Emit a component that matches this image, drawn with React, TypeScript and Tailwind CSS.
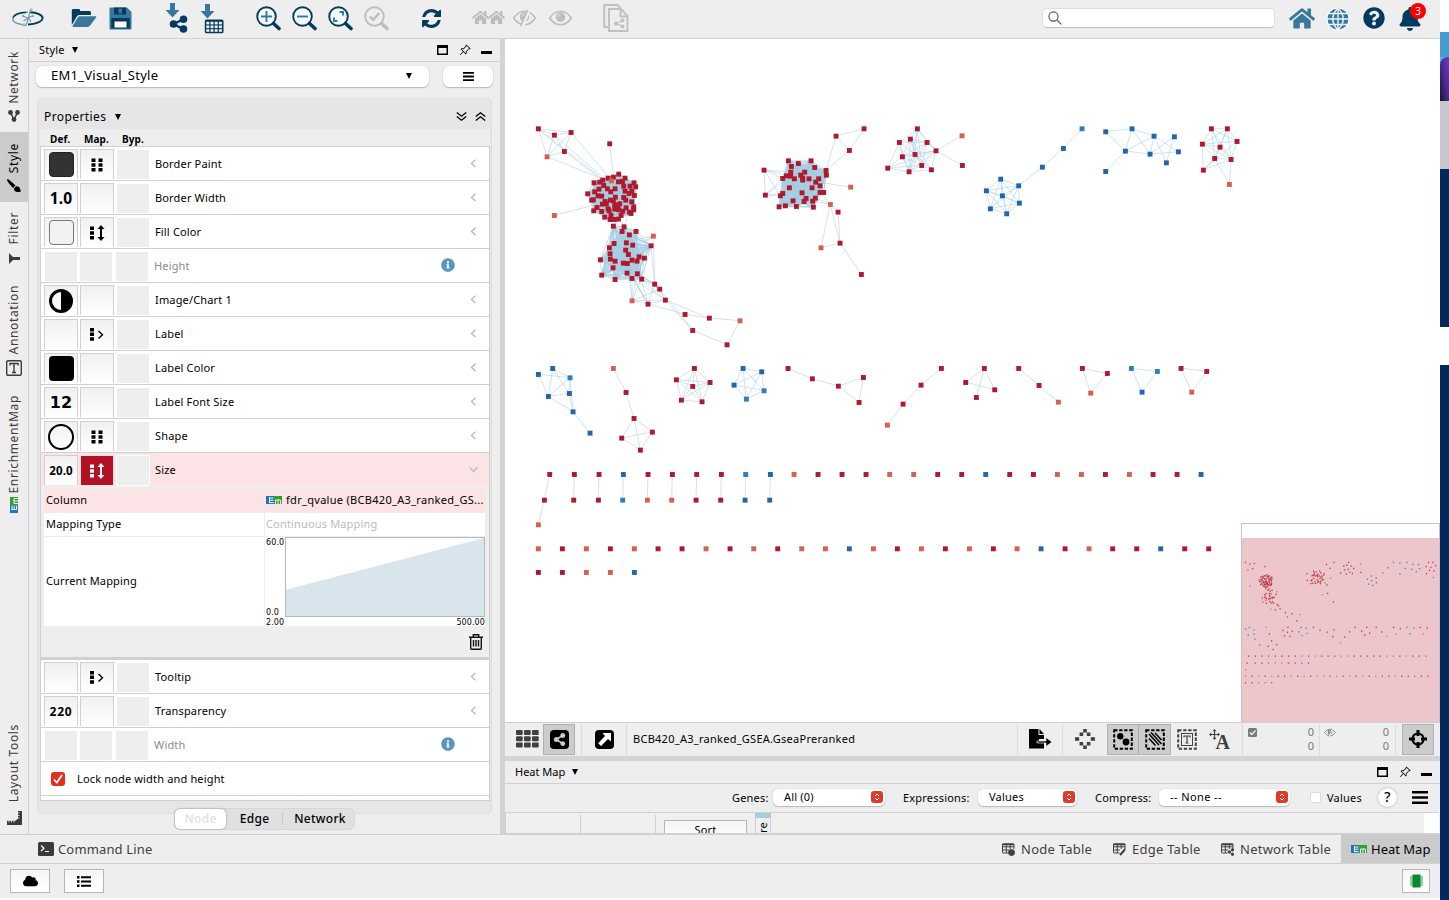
import React from "react";
import { FaHome, FaQuestionCircle, FaBell, FaShareAlt, FaInfoCircle, FaCloud } from "react-icons/fa";
import { BsPinAngle } from "react-icons/bs";

type NodeT = [number, number, string];
type Group = { ox: number; oy: number; nodes: NodeT[]; edges: number[][]; full?: [number, number][] };

const COLORS: Record<string, string> = { R: "#b2182b", O: "#d6604d", B: "#2166ac", L: "#2f7fbc" };

const parse = (s: string): NodeT[] =>
  s.trim().split(/\s+/).map((p) => {
    const [x, y, c] = p.split(",");
    return [Number(x), Number(y), c || "R"];
  });
const pairs = (s: string): number[][] => (s ? s.trim().split(/\s+/).map((p) => p.split("-").map(Number)) : []);

const GROUPS: Group[] = [
  {
    ox: 505, oy: 110,
    nodes: parse(
      `100,56 148,75 198,67 178,124 126,140,O 314,101 148,316,O 445,378,O 381,572,O 705,632,O
      449,522 464,537 481,570 429,582 540,613 613,624 563,661 666,704`
    ),
    edges: pairs("0-1 0-2 0-3 0-4 1-2 1-3 1-4 2-4 2-3 3-4 10-11 10-13 11-12 8-11 8-12 8-13 10-12 12-13 10-7 11-16 12-15 13-14 14-15 12-16 15-9 9-17 17-16"),
  },
  {
    ox: 505, oy: 110,
    nodes: parse(
      `341,192 267,218 248,251 260,270 266,302 299,321 315,328 360,204 387,218 392,230 388,256 380,275 386,290 378,310
      325,201 309,204 293,210 284,216 296,226 282,237 269,245 279,257 290,258 307,236 317,245 330,236 340,215 352,214
      356,228 375,228 360,243 372,250 380,243 356,262 362,270 331,261 325,272 316,270 300,274 292,282 276,292 290,304
      309,296 312,302 329,284 344,281 338,290 329,297 341,299 353,303 363,293 373,306 386,299 348,316 340,327 327,328
      318,316 304,281 265,269 319,212,O`
    ),
    edges: [], full: [[0, 60]],
  },
  {
    ox: 505, oy: 110,
    nodes: parse(
      `325,348 357,350 351,364 393,364 373,374 438,407 327,400 364,398 383,405 313,413 362,420 315,431 370,433 402,440
      418,444 286,449 316,447 330,453 381,450 396,453 355,459 367,460 324,473 366,489 397,491 290,495 330,508 381,505 410,507`
    ),
    edges: [], full: [[0, 29]],
  },
  {
    ox: 750, oy: 110,
    nodes: parse(
      `115,152 183,152 145,160 124,169 194,172 228,181 229,195 122,186 109,197 122,198 98,205 133,206 164,186 152,195
      158,204 158,210 177,206 206,206 197,216 210,227 186,233 118,233 156,248 210,247 221,247 98,250 91,257 196,264
      168,265 188,273 162,274 129,272 139,289 106,287 87,290 190,291
      42,180 46,255 258,78 342,56 298,121 302,231,O 241,283,O 264,306 270,399 213,413,O 334,493`
    ),
    edges: pairs("36-37 36-9 36-10 36-26 36-7 37-10 37-26 37-9 37-25 38-39 38-40 39-40 38-5 40-5 18-41 42-29 42-27 42-43 42-44 43-44 42-45 44-45 44-46 42-23"),
    full: [[0, 36]],
  },
  {
    ox: 750, oy: 110,
    nodes: parse(`502,56 481,87 448,97 531,97 558,122 495,133 457,140 515,166 544,179 477,185 413,174 636,77,O 637,166`),
    edges: pairs("0-1 0-2 0-3 0-4 0-5 0-7 0-9 1-2 1-3 1-5 1-6 1-7 1-8 1-9 2-3 2-5 2-6 2-10 2-9 3-4 3-5 3-7 3-6 3-9 4-5 4-7 4-8 4-9 4-10 4-6 5-6 5-7 5-8 5-9 6-7 6-9 6-10 7-8 7-9 8-9 9-10 7-10 4-11 4-12"),
  },
  {
    ox: 970, oy: 110,
    nodes: parse(`92,207,B 146,227,B 49,242,B 97,257,B 148,279,B 61,296,B 110,311,B 217,171,B 280,115,B 336,56,L`),
    edges: pairs("0-1 0-2 0-3 0-4 0-5 0-6 1-2 1-3 1-4 1-5 1-6 2-3 2-4 2-5 2-6 3-4 3-5 3-6 4-5 4-6 5-6 1-7 7-8 8-9"),
  },
  {
    ox: 970, oy: 110,
    nodes: parse(`407,65,B 486,56,B 552,78,B 466,123,B 540,132,B 613,80,B 625,125,B 589,158,B 407,184,B`),
    edges: pairs("0-1 0-3 1-2 1-3 1-4 2-3 2-4 2-6 2-7 3-4 4-5 4-6 5-7 3-8"),
  },
  {
    ox: 970, oy: 110,
    nodes: parse(`724,56 772,56 697,102 801,94 750,111 734,145 783,148 700,180 778,223,O`),
    edges: pairs("0-1 0-2 0-3 0-4 0-5 0-6 1-2 1-3 1-4 1-5 1-6 2-3 2-6 2-7 2-4 2-5 3-6 3-7 4-6 4-5 5-6 5-7 6-7 5-8 6-8"),
  },
  {
    ox: 505, oy: 350,
    nodes: parse(`100,73,B 143,55,B 195,83,L 193,130,B 130,139,B 204,185,B 255,249,B`),
    edges: pairs("0-2 0-4 1-2 1-3 1-4 2-3 2-4 2-5 3-4 3-5 4-5 5-6"),
  },
  {
    ox: 505, oy: 350,
    nodes: parse(`325,55,O 363,127 387,205 350,264 442,246 406,300`),
    edges: pairs("0-1 1-2 2-3 2-4 2-5 3-4 3-5 4-5"),
  },
  {
    ox: 505, oy: 350,
    nodes: parse(`568,55 514,89 615,97 563,109 529,150 591,155`),
    edges: pairs("0-1 0-2 0-3 0-4 0-5 1-2 1-3 1-4 1-5 2-3 2-4 2-5 3-4 3-5 4-5"),
  },
  {
    ox: 505, oy: 350,
    nodes: parse(`714,55,B 770,65,B 687,105,B 777,122,L 724,147,L`),
    edges: pairs("0-1 0-2 0-3 0-4 1-2 1-3 1-4 2-3 2-4 3-4"),
  },
  {
    ox: 505, oy: 350,
    nodes: parse(`849,55 922,86 1000,108 1075,82 1062,157`),
    edges: pairs("0-1 1-2 2-3 2-4 3-4"),
  },
  {
    ox: 505, oy: 350,
    nodes: parse(
      `134,373 118,450 100,524,O 208,373 206,450 282,373 280,450 355,373,B 353,450,L 429,373 427,450,O 502,373 500,450,O
      575,373 573,450 649,373 647,450 722,373,L 720,450,B 796,373,B 794,450,B 867,373,O 939,373 1011,373 1083,373`
    ),
    edges: pairs("0-1 1-2 3-4 5-6 7-8 9-10 11-12 13-14 15-16 17-18 19-20"),
  },
  {
    ox: 505, oy: 350,
    nodes: parse(
      `100,596,O 172,596 244,596,O 316,596 388,596,O 459,596 531,596 603,596,O 675,596 746,596,O 818,596 890,596,O 961,596,O 1033,596,B
      100,667 172,667 244,667,O 316,667,O 388,667,B`
    ),
    edges: [],
  },
  {
    ox: 870, oy: 350,
    nodes: parse(
      `214,55 153,105 99,162 52,225,O 343,55 287,97 374,119 319,142 446,55 507,106 565,156,O 637,55 712,70 662,129,O
      784,55,L 862,64,L 816,126,B 933,55 1010,64 965,126,O`
    ),
    edges: pairs("0-1 1-2 2-3 4-5 4-6 4-7 5-6 8-9 9-10 11-12 11-13 12-13 14-15 14-16 15-16 17-18 17-19 18-19"),
  },
  {
    ox: 870, oy: 350,
    nodes: parse(
      `59,373,O 131,373,O 203,373 275,373 347,373,B 419,373 490,373 562,373,O 634,373,O 706,373 778,373,O 849,373 921,373 993,373,B
      10,596,O 82,596 154,596,O 226,596 298,596,O 370,596 441,596,O 513,596,B 585,596 657,596,O 728,596 800,596 872,596,B 944,596 1016,596`
    ),
    edges: [],
  },
];

/* Edges that join nodes of different groups, in canvas coordinates. */
const LINKS =
  "M538.3 128.7L605 181M554.3 135L608 182M571 132.3L612 181M564.3 151.3L610 186M547 156.7L605 180M609.7 143.7L613.7 178M554.3 215.3L598 204M613.3 226L619 218M613.3 226L609 249M613.3 226L614 243M613.3 226L602 274M624 227L628 214M624 227L615 210M622 231L612 216M624 227L616 250" +
  "M653.3 236L634 240M653.3 236L620 257M653.3 236L632 247M653.3 236L628 262M654.7 284L637 274M654.7 284L632 270M654.7 284L641 279M659.7 289L641 279M659.7 289L637 273M665.3 300L641 279M665.3 300L632 278M648 304L632 278M648 304L630 273M632 300.7L632 278M632 300.7L641 279M632 300.7L629 273M632 300.7L637 273M648 304L641 279M654.7 284L651 246M648 304L625 262";

const point = (g: Group, n: NodeT): [number, number] => [g.ox + n[0] / 3, g.oy + n[1] / 3];
const segment = (g: Group, a: number, b: number) => {
  const [x1, y1] = point(g, g.nodes[a]);
  const [x2, y2] = point(g, g.nodes[b]);
  return `M${x1.toFixed(1)} ${y1.toFixed(1)}L${x2.toFixed(1)} ${y2.toFixed(1)}`;
};
const sparsePath = GROUPS.map((g) => g.edges.map((e) => segment(g, e[0], e[1])).join("")).join("") + LINKS;
const densePath = GROUPS.map((g) =>
  (g.full || [])
    .map(([from, to]) => {
      let d = "";
      for (let i = from; i < to; i++) for (let j = i + 1; j < to; j++) d += segment(g, i, j);
      return d;
    })
    .join("")
).join("");
const ALL = GROUPS.flatMap((g) => g.nodes.map((n) => ({ p: point(g, n), c: COLORS[n[2]] })));

function NetworkGraph() {
  return (
    <svg className="block h-[683px] w-[935px]" viewBox="505 39 935 683">
      <path d={densePath} stroke="#a6cee3" strokeWidth="0.8" strokeOpacity="0.9" fill="none" />
      {sparsePath.split("M").filter(Boolean).map((d, i) => (
        <path key={i} d={"M" + d} stroke="#a6cee3" strokeWidth="1" strokeOpacity="0.55" fill="none" />
      ))}
      {ALL.map((n, i) => (
        <rect key={i} x={n.p[0] - 2.4} y={n.p[1] - 2.3} width="4.9" height="4.9" fill={n.c} />
      ))}
    </svg>
  );
}

function Minimap() {
  return (
    <div className="absolute bottom-0 right-0 h-[199px] w-[199px] border border-b-0 border-[#d9b9bf] bg-[#ecc6ca]">
      <div className="h-[14px] bg-white" />
      <svg className="block h-[184px] w-[197px]" viewBox="1242 538 197 184">
        {ALL.map((n, i) => (
          <rect key={i} x={1244.8 + (n.p[0] - 538) * 0.272} y={561.8 + (n.p[1] - 128.7) * 0.271} width="1.3" height="1.3" fill={n.c} fillOpacity="0.8" />
        ))}
      </svg>
    </div>
  );
}

const NAVY = "#043a5d";
const STEEL = "#38789f";

const CytoLogo = () => (
  <svg className="h-[20px] w-[34px]" viewBox="0 0 34 20" fill="none">
    <path d="M12 16.500C5 16 1.500 13.500 1.800 10.800 2.300 7 9 4.500 17 4.300" stroke="#5f87a5" strokeWidth="1.200" />
    <path d="M2 9.500C3.500 6.500 9 4.600 15 4.300" stroke={NAVY} strokeWidth="1.500" />
    <path d="M19 4.300c7 .2 12.500 2.500 12.600 5.600.1 3.600-6.600 6.400-14.600 6.600" stroke={NAVY} strokeWidth="1.900" />
    <path d="M20 2c-1.500 2-2 5-2.500 8s-2 6-3 8M12 8l5 2 4-2M12.500 13l5-3 2.500 4" stroke="#6f94ad" strokeWidth="1.100" />
    <circle cx="20" cy="2" r="1.200" stroke="#6f94ad" strokeWidth=".7" /><circle cx="13" cy="17" r="1.200" stroke="#6f94ad" strokeWidth=".7" />
    <circle cx="12" cy="8" r="1" fill="#6f94ad" /><circle cx="22" cy="8" r="1" fill="#6f94ad" />
  </svg>
);
const OpenIcon = () => (
  <svg className="h-[20px] w-[26px]" viewBox="0 0 26 20">
    <path d="M.8 17V2.200Q.8.900 2.200.9h5.600q1.300 0 1.300 1.300v.9h9.400q1.400 0 1.400 1.400V7H8.400Q7 7 6 8.200z" fill={NAVY} />
    <path d="M8.500 8.300h16q1.300 0 .6 1.100l-6 8.100q-.9 1.400-2.600 1.400H2.200q-1.300 0-.5-1.100l5-8.200q.7-1.300 1.800-1.300z" fill={STEEL} />
  </svg>
);
const SaveIcon = () => (
  <svg className="h-[23px] w-[23px]" viewBox="0 0 23 23">
    <path d="M.5 1.500q0-1 1-1H18L22.500 5v16.500q0 1-1 1h-20q-1 0-1-1z" fill={STEEL} />
    <path d="M5 .5h12v7H5z" fill={NAVY} /><path d="M9.500 1.600h3.500v4.800H9.500z" fill={STEEL} />
    <path d="M2.300 11h18.400v10.500H2.300z" fill={NAVY} /><path d="M5.500 14.500h12v6h-12z" fill="#fff" />
  </svg>
);
const Arrow = () => <path d="M5 0h5v7h4.500l-7 7.400L.5 7H5z" fill={STEEL} />;
const ImportNetwork = () => (
  <svg className="h-[30px] w-[23px]" viewBox="0 0 23 30">
    <Arrow />
    <path d="M18 16.500L8.500 21l9.500 5" stroke={NAVY} strokeWidth="2.400" fill="none" />
    <circle cx="18.500" cy="16.300" r="3.800" fill={NAVY} /><circle cx="8.500" cy="21" r="3.800" fill={NAVY} /><circle cx="18.500" cy="26" r="3.800" fill={NAVY} />
  </svg>
);
const ImportTable = () => (
  <svg className="h-[30px] w-[24px]" viewBox="0 0 24 30">
    <Arrow />
    <rect x="4.800" y="15.500" width="18.700" height="13.800" rx="1.500" fill={NAVY} />
    {[0, 1, 2].map((r) => [0, 1, 2, 3].map((c) => <rect key={`${r}${c}`} x={6.3 + c * 4.2} y={17.8 + r * 3.7} width="3" height="2.600" fill="#eee" />))}
  </svg>
);
const Lens = ({ kind }: { kind: string }) => {
  const off = kind === "check";
  const c = off ? "#bdbdbd" : NAVY;
  return (
    <svg className="h-[25px] w-[25px]" viewBox="0 0 25 25" fill="none">
      <circle cx="10.500" cy="10.500" r="9.300" stroke={c} strokeWidth="1.900" fill={off ? "none" : "#f4fafc"} />
      <path d="M17.500 17.500l5.500 5" stroke={c} strokeWidth="3.600" strokeLinecap="round" />
      {kind === "in" && <path d="M5 10.500h11M10.500 5v11" stroke={STEEL} strokeWidth="1.900" />}
      {kind === "out" && <path d="M5 10.500h11" stroke={STEEL} strokeWidth="1.900" />}
      {kind === "fit" && <path d="M11.500 6h3.500v3.500M9.500 15H6v-3.500" stroke={STEEL} strokeWidth="1.900" />}
      {off && <path d="M6 10.500l3.200 3.200L15.200 7" stroke={c} strokeWidth="2.400" />}
    </svg>
  );
};
const Refresh = () => (
  <svg className="h-[19px] w-[19px]" viewBox="0 0 1536 1536">
    <path fill={NAVY} d="M1511 928q0 5-1 7-64 268-268 434.500T764 1536q-146 0-282.500-55T238 1324l-129 129q-19 19-45 19t-45-19-19-45V960q0-26 19-45t45-19h448q26 0 45 19t19 45-19 45l-137 137q71 66 161 102t187 36q134 0 250-65t186-179q11-17 53-117 8-23 30-23h192q13 0 22.500 9.500t9.500 22.500zm25-800v448q0 26-19 45t-45 19h-448q-26 0-45-19t-19-45 19-45l138-138Q969 256 768 256q-134 0-250 65T332 500q-11 17-53 117-8 23-30 23H50q-13 0-22.500-9.500T18 608v-7q65-268 270-434.500T768 0q146 0 284 55.500T1297 212l130-129q19-19 45-19t45 19 19 45z" />
  </svg>
);
const EyeIcon = ({ slash, cls }: { slash?: boolean; cls: string }) => (
  <svg className={cls} viewBox="0 0 26 20" fill="none">
    <path d="M1 10Q6 2.500 13 2.500T25 10q-5 7.500-12 7.500T1 10z" stroke="currentColor" strokeWidth="1.800" />
    <circle cx="13" cy="9" r="5.300" fill="currentColor" />
    <path d="M10.500 8.500q0-2.500 2.500-2.500" stroke="#eee" strokeWidth="1" />
    {slash && <><path d="M10.500 20L18 0" stroke="#eee" strokeWidth="4" /><path d="M8.800 19L16.500 1" stroke="currentColor" strokeWidth="1.700" /></>}
  </svg>
);
const CopyDoc = () => (
  <svg className="h-[28px] w-[26px]" viewBox="0 0 26 28" fill="none" stroke="#c0c0c0" strokeWidth="1.900">
    <path d="M5 23H1.200V1h13.300l3 3M6 5h12l6.500 7v15H6z" /><path d="M17.500 5v7.500h7" />
    <path d="M19.500 16.500L13 19.500l6.500 3" strokeWidth="1.300" />
    <g fill="#c0c0c0" stroke="none"><circle cx="19.500" cy="16.500" r="2" /><circle cx="13" cy="19.500" r="2" /><circle cx="19.500" cy="22.500" r="2" /></g>
  </svg>
);
const Globe = () => (
  <svg className="h-[24px] w-[24px]" viewBox="0 0 24 24" fill="none">
    <circle cx="12" cy="12" r="11.500" fill="#fff" /><circle cx="12" cy="12" r="10.500" fill={STEEL} />
    <path d="M12 1v22M1 12h22M3 6.500h18M3 17.500h18M12 1Q1.500 12 12 23M12 1q10.500 11 0 22" stroke="#e9f3f8" strokeWidth="1.400" />
  </svg>
);
const Maximize = () => (
  <svg className="h-[10px] w-[11px]" viewBox="0 0 11 10"><path d="M.5 0h10q.5 0 .5.500V10H0V.5Q0 0 .5 0zM1.500 3v5.500h8V3z" fillRule="evenodd" /></svg>
);
const WindowButtons = () => (
  <div className="flex items-center">
    <Maximize />
    <BsPinAngle className="ml-[11px] h-[12px] w-[12px]" />
    <div className="ml-[10px] mt-[5px] h-[3px] w-[11px] bg-black" />
  </div>
);
const Caret = ({ cls = "" }: { cls?: string }) => (
  <svg className={`h-[6px] w-[6px] ${cls}`} viewBox="0 0 6 6"><path d="M0 0h6L3 6z" /></svg>
);
const Burger = ({ cls }: { cls: string }) => (
  <svg className={cls} viewBox="0 0 16 13"><path d="M0 0h16v2.600H0zM0 5.200h16v2.600H0zM0 10.400h16V13H0z" /></svg>
);
const EmIcon = ({ cls = "" }: { cls?: string }) => (
  <svg className={`h-[8px] w-[16px] shrink-0 ${cls}`} viewBox="0 0 16 8" fill="none">
    <path d="M0 0h8v8H0z" fill="#1f78b4" /><path d="M8 0h8v8H8z" fill="#33a02c" />
    <path d="M3.500 1.500V7M3 2h4.500M3 4.200h4.500M3 6.600h4.500" stroke="#f0f7fb" strokeWidth="1" />
    <path d="M9.500 8V4h5V8M12 4v4" stroke="#f0f8ef" strokeWidth="1" />
  </svg>
);

function Toolbar() {
  return (
    <div className="flex h-[39px] shrink-0 items-start border-b border-[#d0d0d0] pl-[11px]">
      <div className="mt-[8px]"><CytoLogo /></div>
      <div className="ml-[26px] mt-[8px]"><OpenIcon /></div>
      <div className="ml-[12px] mt-[7px]"><SaveIcon /></div>
      <div className="ml-[33px] mt-[3px]"><ImportNetwork /></div>
      <div className="ml-[12px] mt-[4px]"><ImportTable /></div>
      <div className="ml-[32px] mt-[6px] flex gap-[11px]">
        <Lens kind="in" /><Lens kind="out" /><Lens kind="fit" /><Lens kind="check" />
      </div>
      <div className="ml-[33px] mt-[9px]"><Refresh /></div>
      <div className="ml-[31px] mt-[9px] flex text-[#bdbdbd]"><FaHome className="h-[17px] w-[17px]" /><FaHome className="-ml-[1px] h-[17px] w-[17px]" /></div>
      <EyeIcon slash cls="ml-[7px] mt-[9px] h-[18px] w-[25px] text-[#bdbdbd]" />
      <EyeIcon cls="ml-[11px] mt-[9px] h-[18px] w-[25px] text-[#bdbdbd]" />
      <div className="ml-[30px] mt-[4px]"><CopyDoc /></div>
      <div className="ml-[413px] mt-[8px] flex h-[20px] w-[233px] items-center rounded-[5px] border border-[#dedede] border-b-[#c0c0c0] bg-white pl-[5px]">
        <svg className="h-[14px] w-[14px]" viewBox="0 0 14 14" fill="none" stroke="#555" strokeWidth="1.100"><circle cx="5.500" cy="5.500" r="4.600" /><path d="M9 9l4.300 4.300" /></svg>
      </div>
      <FaHome className="ml-[14px] mt-[6px] h-[25px] w-[26px] text-[#38789f]" />
      <div className="ml-[11px] mt-[7px]"><Globe /></div>
      <FaQuestionCircle className="ml-[13px] mt-[7px] h-[22px] w-[22px] text-[#043a5d]" />
      <div className="relative ml-[14px] mt-[7px]">
        <FaBell className="h-[24px] w-[22px] text-[#043a5d]" />
        <div className="absolute -right-[5px] -top-[4px] flex h-[16px] w-[16px] items-center justify-center rounded-full bg-[#fe0000] text-[10px] text-white">3</div>
      </div>
    </div>
  );
}

const VTab = ({ label, icon, cls }: { label: string; icon: React.ReactNode; cls: string }) => (
  <div className={`flex w-[28px] flex-col items-center justify-between ${cls}`}>
    <div className="rotate-180 whitespace-nowrap text-[12px] leading-[16px] tracking-[0.65px] [writing-mode:vertical-rl]">{label}</div>
    {icon}
  </div>
);

function SideTabs() {
  return (
    <div className="flex w-[29px] shrink-0 flex-col border-r border-[#d0d0d0] text-[#3c3c3c]">
      <VTab label="Network" cls="h-[93px] pb-[10px] pt-[12px]" icon={
        <svg className="h-[12px] w-[12px]" viewBox="0 0 12 12" fill="currentColor"><path d="M2.500 2.500L6 9.500l3.500-7" stroke="currentColor" strokeWidth="1.500" fill="none" /><circle cx="2.500" cy="2.500" r="2.400" /><circle cx="9.500" cy="2.500" r="2.400" /><circle cx="6" cy="9.500" r="2.400" /></svg>} />
      <VTab label="Style" cls="h-[70px] bg-[#cbcbcb] pb-[9px] pt-[11px] text-black" icon={
        <svg className="h-[14px] w-[14px]" viewBox="0 0 14 14"><path d="M.5 0Q2 .3 8.500 6.500L6 9Q.3 3 0 1z" /><path d="M9.300 7.300q2.700-.3 3.500 1.700.6 2.300 1.200 3.500-4.500 1.500-6.300-.7Q6.700 10.500 7 9.300z" /></svg>} />
      <VTab label="Filter" cls="h-[62px] pt-[10px]" icon={<svg className="h-[11px] w-[11px]" viewBox="0 0 11 11" fill="currentColor"><path d="M0 0v11l4-4h7V4H4z" /></svg>} />
      <VTab label="Annotation" cls="h-[112px] pt-[21px]" icon={
        <svg className="h-[16px] w-[16px]" viewBox="0 0 16 16" fill="none" stroke="currentColor"><rect x=".7" y=".7" width="14.600" height="14.600" rx="1.300" strokeWidth="1.400" /><path d="M4 5.500v-2h8v2M8 3.500v9M6 12.500h4" strokeWidth="1.400" /></svg>} />
      <VTab label="EnrichmentMap" cls="h-[137px] pt-[19px]" icon={<div className="flex h-[16px] w-[16px] items-center justify-center"><EmIcon cls="-rotate-90" /></div>} />
      <div className="grow" />
      <VTab label="Layout Tools" cls="mb-[9px] h-[101px]" icon={
        <svg className="h-[14px] w-[15px]" viewBox="0 0 15 14" fill="currentColor"><path d="M11 0h4v14H0V9.700h8.500L11 7.500z" /><path d="M2 9v2.500M4.500 9v2.500M7 9v2.500M10 2h2.500M10 4.500h2.500M10 7h2.500" stroke="#eee" strokeWidth=".8" /></svg>} />
    </div>
  );
}

const Discrete = () => <svg className="h-[14px] w-[12px]" viewBox="0 0 12 14"><path d="M.5.500h4v3.500h-4zM7.500.5h4v3.500h-4zM.5 5.200h4v3.500h-4zM7.500 5.200h4v3.500h-4zM.5 9.900h4v3.500h-4zM7.500 9.900h4v3.500h-4z" fill="currentColor" /></svg>;
const Continuous = () => <svg className="h-[16px] w-[15px]" viewBox="0 0 15 16" fill="currentColor"><path d="M0 1.500h4V5H0zM0 6.200h4v3.500H0zM0 10.900h4v3.500H0zM11 0l3.500 4H12v8h2.500L11 16l-3.500-4H10V4H7.500z" /></svg>;
const Passthrough = () => <svg className="h-[13px] w-[14px]" viewBox="0 0 14 13"><path d="M0 0h4v3.500H0zM0 4.600h4v3.500H0zM0 9.200h4v3.500H0z" /><path d="M8.500 3l4 3.800-4 3.800" fill="none" stroke="#000" strokeWidth="1.400" /></svg>;

const mapIcons: Record<string, React.ReactNode> = { d: <Discrete />, c: <Continuous />, p: <Passthrough /> };

function PropertyRow({ label, def, map, off, active }: { label: string; def?: React.ReactNode; map?: string; off?: boolean; active?: boolean }) {
  const cell = off
    ? "ml-[1px] mr-[1px] mt-[1px] h-[29px] w-[32px] bg-[#eeeeee]"
    : "h-[30px] w-[34px] border border-b-0 border-[#d0d0d0] bg-linear-to-b from-[#f0f0f0] to-white";
  return (
    <div className={`flex h-[34px] shrink-0 border-t border-[#d0d0d0] pl-[3px] pt-[2px] ${active ? "bg-[#fbe3e6]" : "bg-white"}`}>
      <div className={`flex items-center justify-center ${cell}`}>{def}</div>
      <div className={`ml-[2px] flex items-center justify-center ${active ? "h-[30px] w-[34px] border border-b-0 border-[#fbe3e6] bg-[#b31124] text-white" : cell}`}>{map && mapIcons[map]}</div>
      <div className={`ml-[3px] mt-[1px] h-[29px] w-[32px] bg-[#eeeeee] ${active ? "outline-1 outline-white" : ""}`} />
      <div className={`ml-[6px] w-[287px] text-[11px] leading-[30px] tracking-[0.16px] ${off ? "text-[#8a8a8a]" : "text-black"}`}>{label}</div>
      <div className="flex grow items-center pb-[3px]">
        {off ? <FaInfoCircle className="h-[14px] w-[14px] text-[#5a96bb]" /> : (
          <svg className={`ml-[27px] h-[9px] w-[9px] ${active ? "-rotate-90" : ""}`} viewBox="0 0 9 9" fill="none" stroke="#b8b8b8" strokeWidth="1.300"><path d="M6.500.8L2.500 4.500l4 3.700" /></svg>
        )}
      </div>
    </div>
  );
}

const Num = ({ children, cls = "text-[12px] tracking-[0.1px]" }: { children: React.ReactNode; cls?: string }) => (
  <span className={`font-bold ${cls}`}>{children}</span>
);

function Mapping() {
  return (
    <div className="flex h-[171px] shrink-0 flex-col bg-[#eeeeee] pl-[3px] pr-[4px] pt-[3px] text-[11px] tracking-[0.16px]">
      <div className="flex h-[23px] items-center bg-[#fbe3e6]">
        <div className="w-[220px] pb-[2px] pl-[2px]">Column</div>
        <div className="flex grow items-center border-l border-[#eeeeee] pb-[1px] pl-[1px]"><EmIcon /><span className="ml-[4px] whitespace-nowrap pb-[1px] tracking-[0.3px]">fdr_qvalue (BCB420_A3_ranked_GS...</span></div>
      </div>
      <div className="mt-[1px] flex h-[23px] items-center bg-white">
        <div className="w-[220px] pb-[2px] pl-[2px]">Mapping Type</div>
        <div className="h-full grow border-l border-[#eeeeee] pl-[1px] leading-[21px] text-[#bcbcbc]">Continuous Mapping</div>
      </div>
      <div className="mt-[1px] flex h-[89px] items-center bg-white">
        <div className="w-[220px] pb-[2px] pl-[2px]">Current Mapping</div>
        <div className="flex h-full grow flex-col border-l border-[#eeeeee]">
          <div className="flex">
            <div className="flex h-[80px] w-[20px] flex-col justify-between whitespace-nowrap pl-[1px] pt-[1px] font-['DejaVu_Sans'] text-[8px] leading-[9px] tracking-[0.1px]"><span>60.0</span><span>0.0</span></div>
            <svg className="h-[80px] w-[200px]" viewBox="0 0 200 80"><path d="M0 53L199 1V80H0z" fill="#d9e5ed" /><rect x=".5" y=".5" width="199" height="79" fill="none" stroke="#b5b9bc" /></svg>
          </div>
          <div className="flex justify-between pl-[1px] pt-[1px] font-['DejaVu_Sans'] text-[8px] leading-[9px] tracking-[0.1px]"><span>2.00</span><span>500.00</span></div>
        </div>
      </div>
      <div className="flex justify-end pr-[2px] pt-[8px]">
        <svg className="h-[16px] w-[14px]" viewBox="0 0 14 16" fill="none" stroke="#111" strokeWidth="1.400"><path d="M0 3.200h14M4.300 3V.8h5.400V3M1.700 3.200v11q0 1 1 1h8.600q1 0 1-1v-11M4.500 6v6.500M7 6v6.500M9.500 6v6.500" /></svg>
      </div>
    </div>
  );
}

function StylePanel() {
  return (
    <div className="flex w-[471px] shrink-0 flex-col text-[11px]">
      <div className="flex h-[23px] items-center border-b border-[#d0d0d0] pl-[10px] pr-[8px]">
        <span className="-mt-[1px] tracking-[0.2px]">Style</span><Caret cls="ml-[7px]" />
        <div className="ml-auto"><WindowButtons /></div>
      </div>
      <div className="flex pl-[7px] pt-[4px]">
        <div className="flex h-[21px] w-[393px] items-center justify-between rounded-[6px] bg-white pb-[1px] pl-[15px] pr-[17px] text-[13px] tracking-[0.25px] shadow-[0_0_1px_#aaa,0_1px_1px_#bbb]"><span className="pb-[1px]">EM1_Visual_Style</span><Caret /></div>
        <div className="ml-[14px] flex h-[21px] w-[50px] items-center justify-center rounded-[6px] bg-white pb-[1px] shadow-[0_0_1px_#aaa,0_1px_1px_#bbb]"><Burger cls="h-[9px] w-[11px]" /></div>
      </div>
      <div className="ml-[8px] mt-[11px] flex h-[716px] w-[455px] flex-col rounded-[5px] border border-[#dedede] bg-[#e6e6e6] pl-[2px]">
        <div className="flex h-[30px] items-center pl-[4px] pr-[5px] pt-[5px] text-[12px] tracking-[0.4px]">
          <span>Properties</span><Caret cls="ml-[9px]" />
          <svg className="ml-auto h-[9px] w-[11px]" viewBox="0 0 11 9" fill="none" stroke="#000" strokeWidth="1.300"><path d="M.8.500l4.700 3.700L10.200.500M.8 4.500l4.700 3.700 4.700-3.700" /></svg>
          <svg className="ml-[8px] h-[9px] w-[11px]" viewBox="0 0 11 9" fill="none" stroke="#000" strokeWidth="1.300"><path d="M.8 8.500l4.700-3.700 4.700 3.700M.8 4.500L5.500.8l4.700 3.700" /></svg>
        </div>
        <div className="flex h-[17px] w-[450px] items-center bg-[#eeeeee] pl-[1px] pt-[3px] text-[10px] font-bold tracking-[0.1px]">
          <span className="w-[34px] pl-[9px]">Def.</span><span className="w-[38px] pl-[9px]">Map.</span><span className="pl-[9px]">Byp.</span>
        </div>
        <div className="flex h-[655px] w-[450px] flex-col border border-t-0 border-[#d0d0d0] bg-white">
          <PropertyRow label="Border Paint" map="d" def={<div className="h-[25px] w-[25px] rounded-[4px] border border-[#222] bg-[#333333]" />} />
          <PropertyRow label="Border Width" def={<Num cls="text-[15.5px] tracking-[0.2px]">1.0</Num>} />
          <PropertyRow label="Fill Color" map="c" def={<div className="h-[25px] w-[25px] rounded-[4px] border border-[#777] bg-[#f2f2f2]" />} />
          <PropertyRow label="Height" off />
          <PropertyRow label="Image/Chart 1" def={<svg className="h-[24px] w-[24px]" viewBox="0 0 24 24"><circle cx="12" cy="12" r="10.500" fill="none" stroke="#000" strokeWidth="3" /><path d="M12 1a11 11 0 010 22z" /></svg>} />
          <PropertyRow label="Label" map="p" />
          <PropertyRow label="Label Color" def={<div className="h-[25px] w-[25px] rounded-[4px] bg-black" />} />
          <PropertyRow label="Label Font Size" def={<Num cls="font-['DejaVu_Sans'] text-[16px] tracking-[0.2px]">12</Num>} />
          <PropertyRow label="Shape" map="d" def={<svg className="h-[26px] w-[26px]" viewBox="0 0 26 26"><circle cx="13" cy="13" r="12" fill="none" stroke="#000" strokeWidth="2" /></svg>} />
          <PropertyRow label="Size" map="c" active def={<Num cls="text-[11.5px] tracking-[0.1px]">20.0</Num>} />
          <Mapping />
          <div className="h-[2px] shrink-0 bg-[#d0d0d0]" />
          <PropertyRow label="Tooltip" map="p" />
          <PropertyRow label="Transparency" def={<Num cls="text-[12px] tracking-[0.8px]">220</Num>} />
          <PropertyRow label="Width" off />
          <div className="flex h-[34px] shrink-0 items-center border-t border-[#d0d0d0] pl-[10px]">
            <div className="flex h-[14px] w-[14px] items-center justify-center rounded-[3px] bg-[#e0301f]"><svg className="h-[10px] w-[10px]" viewBox="0 0 10 10"><path d="M1 5.500l2.800 3L9 1" fill="none" stroke="#fff" strokeWidth="1.800" /></svg></div>
            <span className="ml-[12px] tracking-[0.16px]">Lock node width and height</span>
          </div>
          <div className="h-px bg-[#d0d0d0]" />
        </div>
      </div>
      <div className="relative -mt-[6px] ml-[145px] flex h-[22px] w-[181px] items-center rounded-[6px] border border-[#d6d6d6] bg-[#e0e0e0] text-[12px] font-medium tracking-[0.3px]">
        <div className="flex h-[20px] w-[51px] items-center justify-center rounded-[5px] bg-white text-[#e0e0e0] shadow-[0_0_2px_#888]">Node</div>
        <div className="w-[57px] text-center">Edge</div>
        <div className="-ml-px h-[12px] w-px bg-[#c8c8c8]" />
        <div className="grow pl-[3px] text-center">Network</div>
      </div>
    </div>
  );
}

const Sep = ({ cls }: { cls: string }) => <div className={`h-[31px] w-px shrink-0 bg-[#dcdcdc] ${cls}`} />;
const Frame = ({ c = "#000" }: { c?: string }) => <rect x="1.200" y="1.200" width="17.600" height="18.600" fill="none" stroke={c} strokeWidth="2" strokeDasharray="3.300 1.700" />;

function ViewToolbar() {
  const stack = "flex flex-col text-right text-[11px] leading-[14px] text-[#7a7a7a]";
  return (
    <div className="flex h-[34px] shrink-0 items-center border-t border-[#cfcfcf] pb-[1px]">
      <svg className="ml-[11px] h-[18px] w-[23px]" viewBox="0 0 23 18" fill="#404040">
        {[0, 1, 2].map((r) => [0, 1, 2].map((c) => <rect key={`${r}${c}`} x={c * 8} y={r * 6.3} width="6.700" height="5" rx="1" />))}
      </svg>
      <div className="ml-[4px] flex h-[31px] w-[32px] items-center justify-center border border-[#b0b0b0] bg-[#cccccc]">
        <div className="flex h-[19px] w-[19px] items-center justify-center rounded-[4px] bg-black text-[#ccc]"><FaShareAlt className="h-[13px] w-[13px]" /></div>
      </div>
      <Sep cls="ml-[6px]" />
      <div className="ml-[13px] flex h-[19px] w-[19px] items-center justify-center rounded-[4px] bg-black">
        <svg className="h-[13px] w-[13px]" viewBox="0 0 13 13"><path d="M4.500 0H13v8.500L10 6l-7 7-2.800-2.800L7 3z" fill="#fff" /></svg>
      </div>
      <Sep cls="ml-[12px]" />
      <span className="ml-[6px] w-[391px] pb-[1px] text-[11px] tracking-[0.27px]">BCB420_A3_ranked_GSEA.GseaPreranked</span>
      <Sep cls="-ml-[7px]" />
      <svg className="ml-[11px] h-[20px] w-[23px] shrink-0" viewBox="0 0 23 20"><path d="M0 0h9.500v6H15v4h-5v4h5v5.500H0z" /><path d="M10.500 0L15 5h-4.500z" /><path d="M8 12h9V8.500l6 4.500-6 4.500V14H8z" stroke="#eee" strokeWidth=".7" /></svg>
      <Sep cls="ml-[10px]" />
      <svg className="ml-[12px] h-[20px] w-[20px] shrink-0" viewBox="0 0 20 20" fill="#404040"><path d="M8.200 0h3.600v3.500H8.200zM4.600 3.500h3.600V7H4.600zM11.800 3.500h3.600V7h-3.600zM0 8.200h4.200v3.600H0zM15.800 8.200H20v3.600h-4.200zM4.600 13h3.600v3.500H4.600zM11.800 13h3.600v3.500h-3.600zM8.200 16.500h3.600V20H8.200z" /></svg>
      <div className="ml-[12px] flex h-[31px] w-[32px] shrink-0 items-center justify-center border border-[#b0b0b0] bg-[#cccccc]"><svg className="h-[21px] w-[20px]" viewBox="0 0 20 21"><Frame /><circle cx="7.300" cy="7.300" r="3.200" /><circle cx="13" cy="13" r="3.400" /></svg></div>
      <div className="flex h-[31px] w-[32px] shrink-0 items-center justify-center border border-l-0 border-[#b0b0b0] bg-[#cccccc]"><svg className="h-[21px] w-[20px]" viewBox="0 0 20 21"><Frame /><path d="M4 5l10 11M6 3.500l10.500 11.500M10 4l6.500 7M4 9.500l6.500 7" stroke="#000" strokeWidth="1.500" /></svg></div>
      <svg className="ml-[6px] h-[21px] w-[20px] shrink-0" viewBox="0 0 20 21" fill="none"><Frame c="#404040" /><rect x="4.500" y="4.500" width="11" height="12" stroke="#404040" /><path d="M7 8.500V7h6v1.500M10 7v7M8.500 14h3" stroke="#404040" strokeWidth="1.200" /></svg>
      <div className="relative ml-[12px] h-[20px] w-[20px] shrink-0">
        <svg className="h-[11px] w-[11px]" viewBox="0 0 11 11" fill="#404040"><path d="M5.500 0l2 2.200H6.100v2.700h2.700V3.500l2.200 2-2.200 2V6.100H6.100v2.700h1.400l-2 2.200-2-2.200h1.400V6.100H2.200v1.400L0 5.500l2.200-2v1.400h2.700V2.200H3.500z" /></svg>
        <span className="absolute -right-[1px] bottom-[1px] font-['Liberation_Serif'] text-[20px] font-bold leading-[12px] text-[#404040]">A</span>
      </div>
      <Sep cls="ml-[13px]" />
      <div className="ml-[5px] mt-[1px] flex h-[29px] w-[66px] shrink-0 justify-between">
        <svg className="mt-[3px] h-[9px] w-[9px]" viewBox="0 0 9 9"><rect width="9" height="9" rx="1.500" fill="#7a7a7a" /><path d="M1.800 4.500l2 2L7.500 2.500" stroke="#eee" strokeWidth="1.300" fill="none" /></svg>
        <div className={stack}><span>0</span><span>0</span></div>
      </div>
      <Sep cls="ml-[5px] h-[20px]" />
      <div className="ml-[4px] mt-[1px] flex h-[29px] w-[65px] shrink-0 justify-between">
        <EyeIcon slash cls="mt-[3px] h-[9px] w-[12px] text-[#7a7a7a]" />
        <div className={stack}><span>0</span><span>0</span></div>
      </div>
      <Sep cls="ml-[6px]" />
      <div className="ml-[6px] flex h-[31px] w-[32px] shrink-0 items-center justify-center border border-[#b0b0b0] bg-[#cccccc]"><svg className="h-[18px] w-[18px]" viewBox="0 0 18 18"><circle cx="9" cy="9" r="5.600" fill="none" stroke="#000" strokeWidth="2" /><path d="M9 0v6M9 12v6M0 9h6M12 9h6" stroke="#000" strokeWidth="3" /></svg></div>
    </div>
  );
}

const Select = ({ label, cls }: { label: string; cls: string }) => (
  <div className={`flex h-[17px] items-center justify-between rounded-[5px] bg-white pl-[11px] pr-[2px] shadow-[0_0_1px_#aaa,0_1px_1px_#bbb] ${cls}`}>
    <span className="pb-[1px]">{label}</span>
    <div className="flex h-[12px] w-[12px] items-center justify-center rounded-[3px] bg-[#e23a28]"><svg className="h-[8px] w-[6px]" viewBox="0 0 6 8" fill="none" stroke="#fff" strokeWidth="1"><path d="M1 3l2-2 2 2M1 5l2 2 2-2" /></svg></div>
  </div>
);

function HeatMap() {
  return (
    <div className="flex grow flex-col text-[11px] tracking-[0.2px]">
      <div className="flex h-[23px] shrink-0 items-center border-b border-[#d0d0d0] pl-[10px] pr-[8px]">
        <span className="-mt-[1px] tracking-[0px]">Heat Map</span><Caret cls="ml-[7px]" />
        <div className="ml-auto"><WindowButtons /></div>
      </div>
      <div className="flex h-[28px] shrink-0 items-center pb-[2px]">
        <span className="ml-[227px] w-[41px]">Genes:</span><Select label="All (0)" cls="w-[112px]" />
        <span className="ml-[18px] w-[75px]">Expressions:</span><Select label="Values" cls="w-[99px]" />
        <span className="ml-[18px] w-[64px]">Compress:</span><Select label="-- None --" cls="w-[131px] tracking-[0.4px]" />
        <div className="ml-[20px] h-[11px] w-[11px] rounded-[2px] border border-[#dcdcdc] bg-white" />
        <span className="ml-[6px] w-[51px]">Values</span>
        <div className="flex h-[19px] w-[19px] items-center justify-center rounded-full bg-white text-[14px] font-medium shadow-[0_0_2px_#999]">?</div>
        <Burger cls="ml-[15px] h-[13px] w-[16px]" />
      </div>
      <div className="mr-px flex h-[21px] shrink-0 overflow-hidden border-l border-t border-[#d0d0d0] bg-[#efefef]">
        <div className="mt-[2px] w-[75px] border-r border-[#d0d0d0]" />
        <div className="mt-[2px] w-[75px] border-r border-[#d0d0d0]" />
        <div className="ml-[8px] mt-[7px] h-[24px] w-[83px] border border-[#b5b5b5] bg-linear-to-b from-[#f5f5f5] to-white pt-[3px] text-center">Sort</div>
        <div className="ml-[8px] w-[16px] border-x border-[#d0d0d0]">
          <div className="-mx-px h-[5px] bg-[#a6cee3]" />
          <div className="ml-[-1px] mt-[4px] rotate-180 text-[11px] leading-[15px] [writing-mode:vertical-rl]">re</div>
        </div>
        <div className="ml-auto w-[15px] bg-white" />
      </div>
      <div className="h-px bg-[#d0d0d0]" />
    </div>
  );
}

const TableIcon = ({ kind }: { kind: number }) => (
  <svg className="h-[13px] w-[13px]" viewBox="0 0 13 13" fill="none" stroke="currentColor" strokeWidth="1">
    <path d="M1 .8h10.500q.5 0 .5.500V6M1 .8q-.5 0-.5.500v8.200q0 .5.500.5h5.500M.5 3.800H12M.5 7H7M4.300 1v9M8.200 1v5" /><path d="M.5 1.500h11.500" strokeWidth="1.500" />
    {kind === 0 && <circle cx="9.500" cy="9.500" r="3" fill="currentColor" />}
    {kind === 1 && <path d="M7.500 11.500l4-4.500M7 12l1-1M11 7l1-1" strokeWidth="2" />}
    {kind === 2 && <><path d="M12 6.500L8.500 9l3.500 2.500" /><circle cx="11.500" cy="6.800" r="1.200" fill="currentColor" /><circle cx="8.300" cy="9" r="1.200" fill="currentColor" /><circle cx="11.500" cy="11.300" r="1.200" fill="currentColor" /></>}
  </svg>
);

function Footer() {
  return (
    <>
      <div className="flex h-[29px] shrink-0 items-center border-t border-[#d0d0d0] text-[13px] text-[#404040]">
        <svg className="ml-[38px] h-[14px] w-[16px]" viewBox="0 0 16 14"><rect width="16" height="14" rx="1.500" fill="#3a3a3a" /><path d="M3 3.500L6 6.200 3 9M7 9.500h4" stroke="#fff" strokeWidth="1.200" fill="none" /></svg>
        <span className="ml-[4px] grow tracking-[0.15px]">Command Line</span>
        <TableIcon kind={0} /><span className="ml-[6px] w-[71px] whitespace-nowrap tracking-[0.25px]">Node Table</span>
        <div className="ml-[21px]"><TableIcon kind={1} /></div><span className="ml-[6px] w-[68px] whitespace-nowrap tracking-[0.25px]">Edge Table</span>
        <div className="ml-[21px]"><TableIcon kind={2} /></div><span className="ml-[6px] w-[91px] whitespace-nowrap tracking-[0.25px]">Network Table</span>
        <div className="ml-[10px] flex h-full w-[99px] items-center bg-[#cbcbcb] pl-[10px] text-black"><EmIcon /><span className="ml-[4px] whitespace-nowrap">Heat Map</span></div>
      </div>
      <div className="flex h-[35px] shrink-0 items-center border-t border-[#d0d0d0] px-[10px]">
        <div className="flex h-[24px] w-[40px] items-center justify-center border border-[#b5b5b5] bg-linear-to-b from-[#f6f6f6] to-white"><FaCloud className="h-[14px] w-[15px]" /></div>
        <div className="ml-[14px] flex h-[24px] w-[40px] items-center justify-center border border-[#b5b5b5] bg-linear-to-b from-[#f6f6f6] to-white">
          <svg className="h-[11px] w-[14px]" viewBox="0 0 14 11"><path d="M0 0h2.500v2.500H0zM4 .2h10v2H4zM0 4.200h2.500v2.500H0zM4 4.500h10v2H4zM0 8.500h2.500V11H0zM4 8.700h10v2H4z" /></svg>
        </div>
        <div className="ml-auto flex h-[24px] w-[28px] items-center justify-center border border-[#b5b5b5] bg-linear-to-b from-[#f6f6f6] to-white">
          <svg className="h-[14px] w-[13px]" viewBox="0 0 13 14"><path d="M2.500.5h8v13h-8z" fill="#078a2e" /><path d="M0 3h13M0 5h13M0 7h13M0 9h13M0 11h13" stroke="#078a2e" strokeWidth=".8" /></svg>
        </div>
      </div>
    </>
  );
}

export default function App() {
  return (
    <div className="flex h-[900px] w-[1449px] overflow-hidden bg-white font-['Noto_Sans',sans-serif] leading-none text-black">
      <div className="flex h-[898px] w-[1440px] shrink-0 flex-col bg-[#eeeeee]">
        <Toolbar />
        <div className="flex h-[795px] shrink-0">
          <SideTabs />
          <StylePanel />
          <div className="w-[5px] shrink-0 bg-[#d4d4d4]" />
          <div className="flex w-[935px] shrink-0 flex-col">
            <div className="relative h-[683px] shrink-0 bg-white"><NetworkGraph /><Minimap /></div>
            <ViewToolbar />
            <div className="h-[5px] shrink-0 bg-[#d4d4d4]" />
            <HeatMap />
          </div>
        </div>
        <Footer />
      </div>
      <div className="flex w-[9px] flex-col">
        <div className="h-[32px] bg-white" />
        <div className="h-[25px] bg-[#459dcf]" />
        <div className="h-[44px] bg-[#4fb4e6]"><div className="h-full rounded-tl-[8px] bg-linear-to-bl from-[#6a3cc0] via-[#4b2a94] to-[#1d1030]" /></div>
        <div className="h-[68px] bg-[#c9c6d2]" />
        <div className="h-[158px] bg-[#03295a]" />
        <div className="h-[38px] bg-white" />
        <div className="grow bg-[#03295a]" />
      </div>
    </div>
  );
}
